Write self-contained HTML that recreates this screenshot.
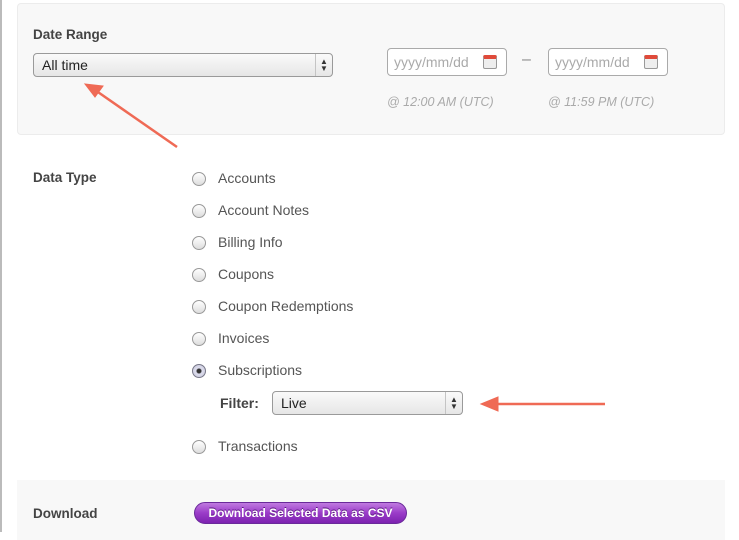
<!DOCTYPE html>
<html><head><style>
*{margin:0;padding:0;box-sizing:border-box}
body{width:739px;height:532px;background:#fff;font-family:"Liberation Sans",Arial,sans-serif;position:relative;overflow:hidden;color:#555}
.a{position:absolute}
.panel{background:#f8f8f8;border:1px solid #ececec;border-radius:4px}
.lbl{font-weight:bold;font-size:13.5px;color:#444}
.sel{border:1px solid #9a9a9a;border-radius:4px;background:linear-gradient(#fafafa,#e6e6e6);font-size:14px;color:#222;padding-left:8px;line-height:22px}
.sel .arr{position:absolute;right:0;top:0;width:17px;height:100%;border-left:1px solid #c4c4c4;font-size:8px;line-height:7px;text-align:center;padding-top:4px;color:#333}
.inp{border:1px solid #aaa;border-radius:4px;background:#fff;width:120px;height:28px;font-size:14px;color:#aaa;padding:5px 0 0 6px}
.cal{position:absolute;right:9px;top:6px;width:14px;height:14px;background:#eee;border:1px solid #999;border-top:4px solid #e04a3a;border-radius:2px}
.ts{font-size:12.5px;font-style:italic;color:#aaa}
.r{width:14px;height:14px;border-radius:50%;border:1px solid #999;background:linear-gradient(#fff,#ddd)}
.rl{font-size:14px;color:#555}
</style></head><body>
<div class="a" style="left:0;top:0;width:2px;height:532px;background:#bbb"></div>
<div class="a panel" style="left:17px;top:3px;width:708px;height:132px"></div>
<div class="a lbl" style="left:33px;top:27px">Date Range</div>
<div class="a sel" style="left:33px;top:53px;width:300px;height:24px">All time<div class="arr">▲<br>▼</div></div>
<div class="a inp" style="left:387px;top:48px">yyyy/mm/dd<div class="cal"></div></div>
<div class="a" style="left:522px;top:51px;font-size:16px;color:#888">–</div>
<div class="a inp" style="left:548px;top:48px">yyyy/mm/dd<div class="cal"></div></div>
<div class="a ts" style="left:387px;top:95px">@ 12:00 AM (UTC)</div>
<div class="a ts" style="left:548px;top:95px">@ 11:59 PM (UTC)</div>
<svg class="a" style="left:0;top:0" width="739" height="532">
<g stroke="#ef6a55" stroke-width="2.5" fill="#ef6a55">
<line x1="177" y1="147" x2="95" y2="90"/>
<polygon points="85,84 103,86 95,97" stroke-width="1"/>
<line x1="605" y1="404" x2="495" y2="404"/>
<polygon points="481,404 498,397 498,411" stroke-width="1"/>
</g></svg>
<div class="a lbl" style="left:33px;top:170px">Data Type</div>
<div class="a r" style="left:192px;top:172px"></div><div class="a rl" style="left:218px;top:170px">Accounts</div>
<div class="a r" style="left:192px;top:204px"></div><div class="a rl" style="left:218px;top:202px">Account Notes</div>
<div class="a r" style="left:192px;top:236px"></div><div class="a rl" style="left:218px;top:234px">Billing Info</div>
<div class="a r" style="left:192px;top:268px"></div><div class="a rl" style="left:218px;top:266px">Coupons</div>
<div class="a r" style="left:192px;top:300px"></div><div class="a rl" style="left:218px;top:298px">Coupon Redemptions</div>
<div class="a r" style="left:192px;top:332px"></div><div class="a rl" style="left:218px;top:330px">Invoices</div>
<div class="a r" style="left:192px;top:364px;border-color:#778;background:radial-gradient(circle,#333 0,#333 2px,#dde 3px,#ccd 7px)"></div><div class="a rl" style="left:218px;top:362px">Subscriptions</div>
<div class="a lbl" style="left:220px;top:395px;font-size:14px">Filter:</div>
<div class="a sel" style="left:272px;top:391px;width:191px;height:24px">Live<div class="arr">▲<br>▼</div></div>
<div class="a r" style="left:192px;top:440px"></div><div class="a rl" style="left:218px;top:438px">Transactions</div>
<div class="a" style="left:17px;top:480px;width:708px;height:60px;background:#f8f8f8"></div>
<div class="a lbl" style="left:33px;top:506px">Download</div>
<div class="a" style="left:194px;top:502px;width:213px;height:22px;border-radius:11px;border:1px solid #6a2a9a;background:linear-gradient(#c07ae0,#9a3cc8 50%,#7d22b0);color:#fff;font-weight:bold;font-size:12px;text-align:center;line-height:20px;text-shadow:0 -1px 0 #5a1a80">Download Selected Data as CSV</div>
</body></html>
